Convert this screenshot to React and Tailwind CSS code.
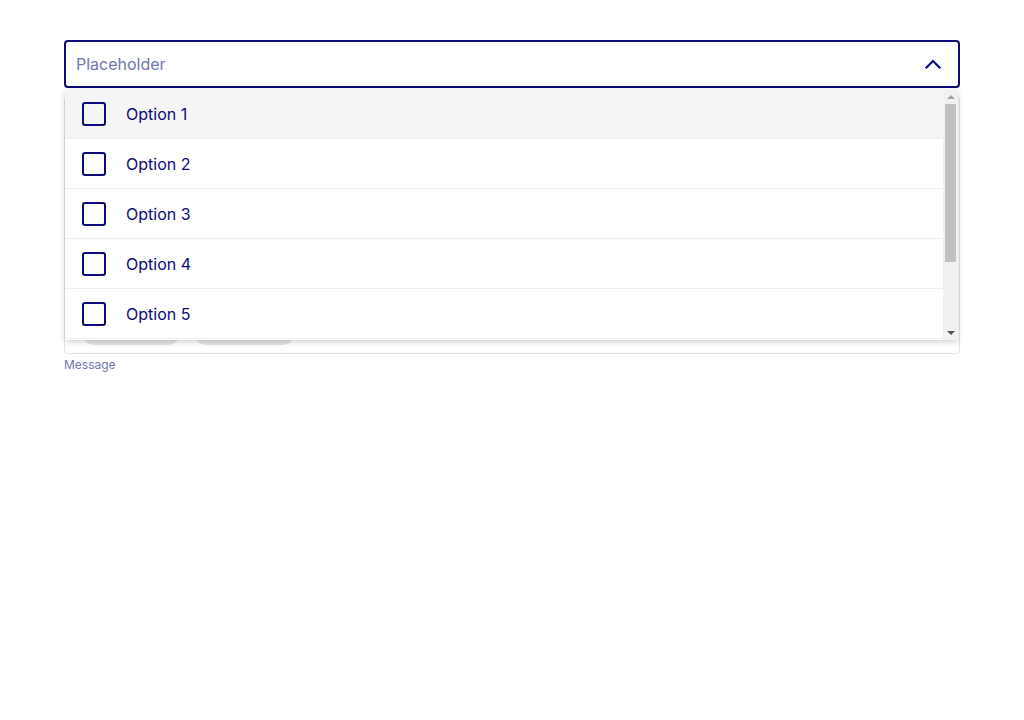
import React from 'react';

const options = ['Option 1', 'Option 2', 'Option 3', 'Option 4', 'Option 5'];

const ChevronUp = () => (
    <svg width="18" height="18" viewBox="0 0 18 18" fill="none" stroke="#0b0b7a" strokeWidth="2.2" strokeLinecap="square">
        <path d="M2.5 12.5 L9 6 L15.5 12.5" />
    </svg>
);

const FakeScrollbar = () => (
    <div className="relative flex w-[15px] shrink-0 flex-col bg-[#f1f1f1]">
        <div className="flex h-[15px] items-center justify-center">
            <div className="h-0 w-0 border-x-[4px] border-b-[4px] border-x-transparent border-b-[#a3a3a3]" />
        </div>
        <div className="flex-1 px-[2px]">
            <div className="h-[158px] w-[11px] bg-[#c1c1c1]" />
        </div>
        <div className="flex h-[15px] items-center justify-center">
            <div className="h-0 w-0 border-x-[4px] border-t-[4px] border-x-transparent border-t-[#505050]" />
        </div>
    </div>
);

const App = () => {
    return (
        <div className="min-h-[720px] bg-white pt-10 px-16" style={{ fontFamily: 'Inter, "Open Sans", sans-serif' }}>
            <div className="relative w-[896px]">
                {/* select trigger */}
                <div className="flex h-12 items-center justify-between rounded border-2 border-[#0b0b7a] pl-[10px] pr-[16px]">
                    <span className="text-base text-[#7276b2]">Placeholder</span>
                    <ChevronUp />
                </div>

                {/* chips box behind the menu */}
                <div className="mt-2 flex h-[258px] items-end gap-3 rounded border border-[#e3e3e3] px-4 pb-2">
                    <div className="h-7 w-[100px] rounded-full bg-[#e4e4e4]" />
                    <div className="h-7 w-[103px] rounded-full bg-[#e4e4e4]" />
                </div>
                <p className="mt-px text-xs leading-5 text-[#7276b2]">Message</p>

                {/* open menu */}
                <div className="absolute left-px right-[2px] top-[49px] flex h-[251px] overflow-hidden bg-white shadow-[0_2px_6px_rgba(0,0,0,0.18)]">
                    <div className="flex-1">
                        {options.map((opt, i) => (
                            <div
                                key={opt}
                                className={`flex h-[50px] items-center gap-5 border-b border-[#eeeeee] pl-[17px] ${i === 0 ? 'bg-[#f5f5f5]' : ''}`}
                            >
                                <div className="h-6 w-6 rounded-[3px] border-2 border-[#0b0b7a]" />
                                <span className="text-base text-[#0b0b7a]">{opt}</span>
                            </div>
                        ))}
                    </div>
                    <FakeScrollbar />
                </div>
            </div>
        </div>
    );
};

export default App;
